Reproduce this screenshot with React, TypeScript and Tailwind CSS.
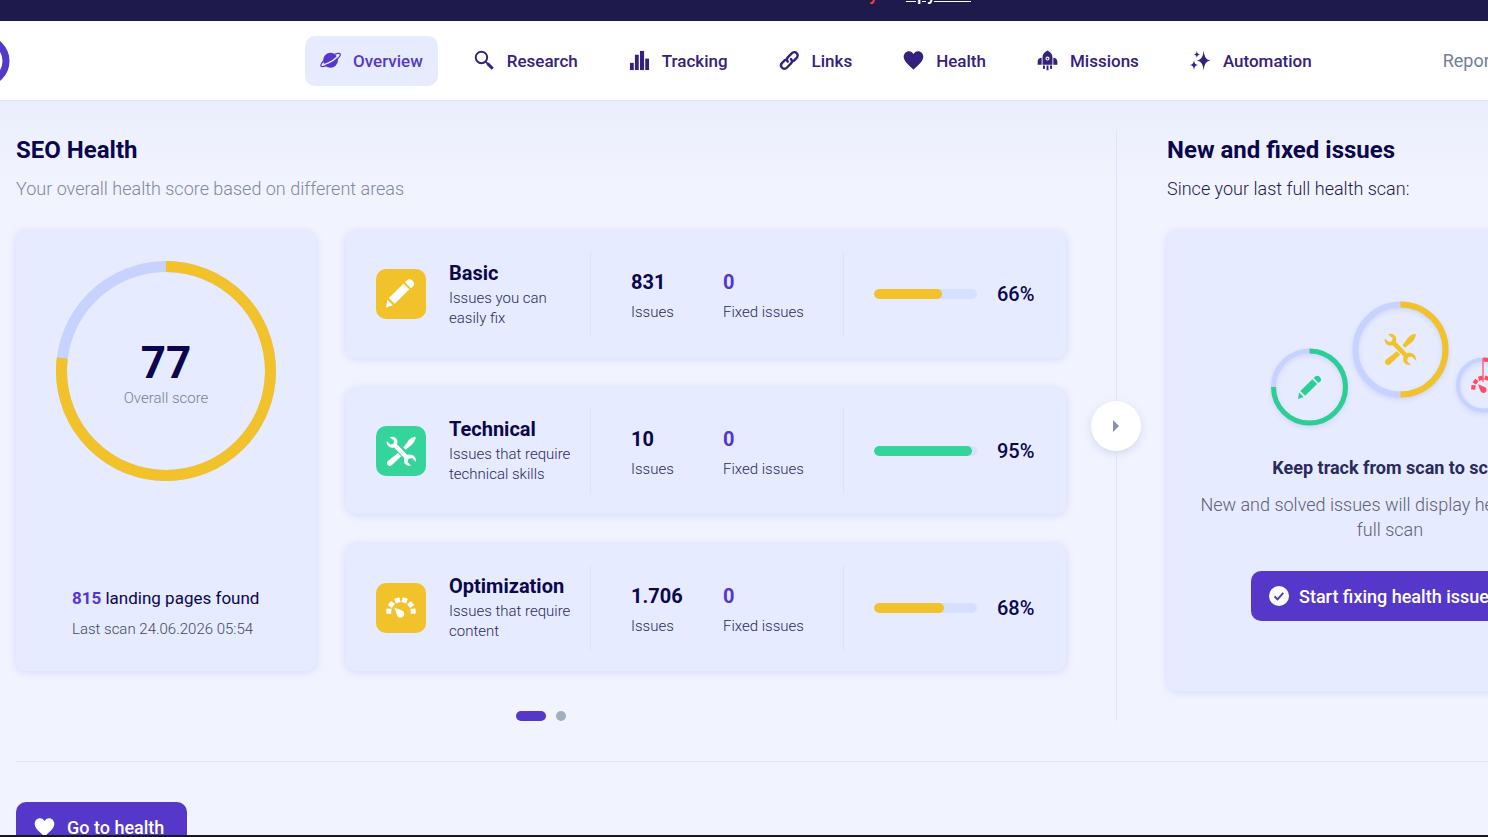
import type { ReactNode } from "react";

type IconProps = { className?: string };

function PlanetIcon({ className }: IconProps) {
  return (
    <svg viewBox="0 0 22 22" className={className} aria-hidden="true" fill="none">
      <circle cx="11" cy="10.700" r="7.800" fill="currentColor" />
      <path
        d="M15.500 4.300 C19.500 3 21.800 3.400 21.200 5.400 C20.200 8.200 16.400 11.400 12.200 13.900 C7.600 16.700 2.200 18.300 1 16.800 C0.500 15.600 1.700 13.600 3.600 11.500"
        stroke="currentColor"
        strokeWidth="1.300"
      />
      <path d="M18.400 5 C19.600 6.400 14.600 10.600 10.400 12.700 C7 14.500 3.400 15.800 3 14.400" stroke="#e6ebfd" strokeWidth="1.500" />
    </svg>
  );
}

function SearchIcon({ className }: IconProps) {
  return (
    <svg viewBox="0 0 22 22" className={className} aria-hidden="true" fill="none" stroke="currentColor">
      <circle cx="7.800" cy="7.800" r="6" strokeWidth="2" />
      <path d="M12.400 12.400 L14.500 14.500" strokeWidth="2" />
      <path d="M14.300 14.300 L19.600 19.600" strokeWidth="3.200" />
    </svg>
  );
}

function BarsIcon({ className }: IconProps) {
  return (
    <svg viewBox="0 0 22 22" className={className} aria-hidden="true" fill="currentColor">
      <rect x="1" y="13.500" width="4" height="7.500" />
      <rect x="6.200" y="5" width="4" height="16" />
      <rect x="11.500" y="1" width="4.300" height="20" />
      <rect x="17" y="9" width="4" height="12" />
    </svg>
  );
}

function LinkIcon({ className }: IconProps) {
  return (
    <svg viewBox="0 0 22 22" className={className} aria-hidden="true" fill="none" stroke="currentColor" strokeWidth="2.500" strokeLinecap="round">
      <path d="M9.200 12.200 C7.600 10.600 7.900 9 9.200 7.700 L13.300 3.500 C14.900 1.900 17 1.700 18.500 3.200 C20.100 4.700 19.900 6.900 18.300 8.500 L15.400 11.400" />
      <path d="M12.500 9.500 C14.100 11.100 13.900 12.700 12.600 14 L8.400 18.300 C6.800 19.900 4.700 20.100 3.200 18.600 C1.700 17.100 1.900 14.900 3.500 13.300 L6.400 10.400" />
    </svg>
  );
}

function HeartIcon({ className }: IconProps) {
  return (
    <svg viewBox="0 0 22 22" className={className} aria-hidden="true" fill="currentColor">
      <path d="M11 20.700 C8.500 17.600 0.700 12.800 0.700 7.200 C0.700 3.700 3.200 1.200 6.200 1.200 C8.400 1.200 10.100 2.300 11 4.300 C11.900 2.300 13.600 1.200 15.800 1.200 C18.800 1.200 21.300 3.700 21.300 7.200 C21.300 12.800 13.500 17.600 11 20.700 Z" />
    </svg>
  );
}

function ShuttleIcon({ className }: IconProps) {
  return (
    <svg viewBox="0 0 22 22" className={className} aria-hidden="true" fill="currentColor">
      <path
        fillRule="evenodd"
        d="M11 0.600 C14 2 16.200 4.600 16.200 7.600 V15.400 H5.800 V7.600 C5.800 4.600 8 2 11 0.600 Z M11 6.900 A2.100 2.100 0 1 0 11 11.100 A2.100 2.100 0 1 0 11 6.900 Z"
      />
      <circle cx="11" cy="9" r="1" />
      <path d="M4.900 8 V15.400 H0.700 V12 C0.700 9.800 2.500 8 4.900 8 Z M17.100 8 V15.400 H21.300 V12 C21.300 9.800 19.500 8 17.100 8 Z" />
      <rect x="6.300" y="16.200" width="2" height="3.600" />
      <rect x="10" y="16.200" width="2" height="5" />
      <rect x="13.700" y="16.200" width="2" height="3.600" />
    </svg>
  );
}

function SparklesIcon({ className }: IconProps) {
  return (
    <svg viewBox="0 0 22 22" className={className} aria-hidden="true" fill="currentColor">
      <path d="M14.300 0.500 C15.200 7.400 16.400 9.800 21.400 11 C16.400 12.200 15.200 14.600 14.300 21.500 C13.400 14.600 12.200 12.200 7.200 11 C12.200 9.800 13.400 7.400 14.300 0.500 Z" />
      <path d="M7.200 1 C7.700 3.500 8.200 4.200 10.200 4.700 C8.200 5.200 7.700 5.900 7.200 8.400 C6.700 5.900 6.200 5.200 4.200 4.700 C6.200 4.200 6.700 3.500 7.200 1 Z" />
      <path d="M4.200 11 C4.900 14.400 5.700 15.200 8.400 15.800 C5.700 16.400 4.900 17.200 4.200 20.600 C3.500 17.200 2.700 16.400 0 15.800 C2.700 15.200 3.500 14.400 4.200 11 Z" />
    </svg>
  );
}

const pencilShape = (
  <>
    <path d="M20.800 1.400 C22.400 -0.100 24.500 -0.100 26 1.300 L27 2.300 C28.600 3.900 28.500 5.900 27.100 7.300 L25 9.200 L19 3.200 Z" />
    <path d="M17.500 4.500 L23.300 10.300 L8.700 24.800 L2.900 19 Z" />
    <path d="M1.400 20.800 L6.900 26.300 L0 28.600 Z" />
  </>
);

const toolsShape = (
  <>
    <path d="M28 0.900 C29 0.300 30.200 1.400 29.600 2.500 C28.600 5.800 26.700 8.400 24.500 9.700 L19.600 13.700 L17.300 11.400 L21.200 6.400 C22.500 3.600 25 1.700 28 0.900 Z" />
    <path d="M12 17 L15.200 20.200 L6 29 C4.800 30.200 3 30.200 1.900 29.200 C0.700 28.100 0.600 26.300 1.800 25.100 Z" />
    <path d="M3.600 1.200 C7.100 -0.300 10.600 1.400 11.300 4.600 C11.600 5.900 11.400 7 11 8.200 L21.300 18.900 C24 18 27 18.700 28.700 20.800 C29.800 22.200 30.100 23.900 29.700 25.700 L26 21.900 L22.300 23 L21.500 26.200 L25 29.600 C21.200 30.600 17.300 27.700 18 23.500 L18.300 22 L8 11.400 C4.200 12.700 0 9.800 0.700 5.100 L4.500 8.400 L7.500 7.700 L8.100 4.700 Z" />
  </>
);

const gaugeShape = (
  <>
    <path d="M8.200 14.400 L16.600 17.800 C18.500 18.900 18.900 21.400 17.600 23.100 C16.300 24.800 13.900 25.100 12.300 23.900 C11.600 23.300 11.200 22.600 11 21.900 Z" />
    {[-86, -52, -17, 17, 52, 86].map((angle) => (
      <rect key={angle} x="12.400" y="4.300" width="5.200" height="5" transform={`rotate(${angle} 15 19)`} />
    ))}
  </>
);

const shapes: Record<string, ReactNode> = { pencil: pencilShape, tools: toolsShape, gauge: gaugeShape };

const navItems = [
  { label: "Overview", Icon: PlanetIcon, active: true },
  { label: "Research", Icon: SearchIcon },
  { label: "Tracking", Icon: BarsIcon },
  { label: "Links", Icon: LinkIcon },
  { label: "Health", Icon: HeartIcon },
  { label: "Missions", Icon: ShuttleIcon },
  { label: "Automation", Icon: SparklesIcon },
];

const areas = [
  { name: "Basic", text: "Issues you can easily fix", issues: "831", fixed: "0", score: 66, icon: "pencil", tone: "bg-[#f1c229]" },
  { name: "Technical", text: "Issues that require technical skills", issues: "10", fixed: "0", score: 95, icon: "tools", tone: "bg-[#35d49a]" },
  { name: "Optimization", text: "Issues that require content", issues: "1.706", fixed: "0", score: 68, icon: "gauge", tone: "bg-[#f1c229]" },
];

const cardClass = "rounded-[10px] bg-[#e6ebff] shadow-[0_1px_8px_0_#d2d7ff]";

function Banner() {
  return (
    <div className="h-[21px] overflow-hidden bg-[#1e1a4b]">
      <div className="mx-auto -mt-4 flex w-[454px] justify-end gap-7 text-[18px] leading-5 font-medium">
        <span className="text-[#ff3f3f]">Today</span>
        <a href="#spy" className="text-white underline">Spy tool</a>
      </div>
    </div>
  );
}

function Header() {
  return (
    <header className="flex h-20 items-center overflow-hidden border-b border-[#dbe3fa] bg-white">
      <a href="#home" aria-label="Home" className="-ml-[41px] w-[346px] shrink-0">
        <svg viewBox="0 0 51 52" className="h-[52px] w-[51px]">
          <circle cx="25" cy="26" r="22" fill="none" stroke="#5538c9" strokeWidth="7" />
        </svg>
      </a>
      <nav className="flex shrink-0 items-center gap-[21px]">
        {navItems.map(({ label, Icon, active }) => (
          <a
            key={label}
            href={`#${label.toLowerCase()}`}
            className={`flex h-[50px] items-center gap-3 rounded-[10px] px-[15px] pt-0.5 text-[17px] font-medium ${
              active ? "bg-[#e6ebfd] text-[#5538c9]" : "text-[#35217b]"
            }`}
          >
            <Icon className="-mt-0.5 size-[21px]" />
            {label}
          </a>
        ))}
      </nav>
      <a href="#reports" className="ml-[116px] shrink-0 text-[18px] text-[#718096]">Reports</a>
    </header>
  );
}

function ScoreCard() {
  return (
    <article className={`flex w-[300px] shrink-0 flex-col items-center justify-between pt-[30px] pb-[26px] ${cardClass}`}>
      <div className="grid size-[220px] place-items-center">
        <svg viewBox="0 0 220 220" className="col-start-1 row-start-1 size-full" aria-hidden="true">
          <g fill="none" strokeWidth="11" transform="rotate(-90 110 110)">
            <circle cx="110" cy="110" r="104.500" stroke="#c8d2ff" />
            <circle cx="110" cy="110" r="104.500" stroke="#f1c229" pathLength="100" strokeDasharray="77 23" />
          </g>
        </svg>
        <div className="col-start-1 row-start-1 pt-1 text-center">
          <p className="text-[44px] leading-[50px] font-bold text-[#0b064d]">77</p>
          <p className="text-[15px] leading-5 font-light text-[#787e9b]">Overall score</p>
        </div>
      </div>
      <div className="w-[188px] whitespace-nowrap">
        <p className="text-[17px] leading-[31px] text-[#0b064d]">
          <strong className="font-bold text-[#5538c9]">815</strong> landing pages found
        </p>
        <p className="text-[15px] leading-[31px] font-light text-[#454860]">Last scan 24.06.2026 05:54</p>
      </div>
    </article>
  );
}

function AreaCard({ area }: { area: (typeof areas)[number] }) {
  return (
    <article className={`flex items-center px-[30px] ${cardClass}`}>
      <span className={`grid size-[50px] shrink-0 place-items-center rounded-[10px] ${area.tone}`}>
        <svg viewBox="0 0 30 30" className="size-[30px] fill-white" aria-hidden="true">{shapes[area.icon]}</svg>
      </span>
      <div className="ml-[23px] flex h-[86px] w-[142px] shrink-0 flex-col justify-center border-r border-[#dce2fa] pb-[3px]">
        <h3 className="text-[20px] leading-[30px] font-bold text-[#0b064d]">{area.name}</h3>
        <p className="w-[125px] text-[15px] leading-5 font-light text-[#2b2a5c]">{area.text}</p>
      </div>
      <dl className="flex h-[86px] shrink-0 items-center border-r border-[#dce2fa] pt-1.5 pl-10 leading-[30px]">
        <div className="flex w-[92px] flex-col-reverse">
          <dt className="text-[15px] font-light text-[#2b2a5c]">Issues</dt>
          <dd className="text-[20px] font-bold text-[#0b064d]">{area.issues}</dd>
        </div>
        <div className="flex w-[120px] flex-col-reverse">
          <dt className="text-[15px] font-light text-[#2b2a5c]">Fixed issues</dt>
          <dd className="text-[20px] font-bold text-[#5538c9]">{area.fixed}</dd>
        </div>
      </dl>
      <div className="ml-[30px] h-2.5 flex-1 overflow-hidden rounded-full bg-[#d7dfff]">
        <div className={`h-full rounded-full ${area.tone}`} style={{ width: `${area.score}%` }} />
      </div>
      <p className="ml-5 w-[39px] text-[20px] leading-[30px] font-medium text-[#0b064d]">{area.score}%</p>
    </article>
  );
}

function Ring({ cx, cy, r, width, share, color }: { cx: number; cy: number; r: number; width: number; share: number; color: string }) {
  return (
    <g fill="none" strokeWidth={width} className="drop-shadow-[0_2px_2px_#cfd5fb]">
      <circle cx={cx} cy={cy} r={r} stroke="#c8d2ff" />
      <circle cx={cx} cy={cy} r={r} stroke={color} pathLength="100" strokeDasharray={`${share} ${100 - share}`} transform={`rotate(-90 ${cx} ${cy})`} />
    </g>
  );
}

function ScanRings() {
  return (
    <svg viewBox="-1 1 242 130" className="h-[130px] w-[242px] shrink-0" aria-hidden="true">
      <Ring cx={39.5} cy={87} r={36} width={5} share={75} color="#2bce93" />
      <Ring cx={130.5} cy={49.5} r={45} width={6} share={50} color="#f1c229" />
      <Ring cx={213.5} cy={85} r={25.500} width={4} share={25} color="#ff4d5e" />
      <g fill="#2bce93" transform="translate(28 75.500) scale(0.820)">{pencilShape}</g>
      <g fill="#f1c229" transform="translate(114 33) scale(1.070)">{toolsShape}</g>
      <g fill="#ff4d5e" transform="translate(201 72) scale(0.850)">{gaugeShape}</g>
      <path d="M213 58 V82" stroke="#ff4d5e" strokeWidth="1.200" />
    </svg>
  );
}

export default function App() {
  return (
    <div className="flex h-screen flex-col overflow-hidden border-b-2 border-[#1a181d] bg-[#f1f3ff] font-[Roboto,sans-serif]">
      <div className="shrink-0">
        <Banner />
        <Header />
      </div>
      <main className="shrink-0 bg-[linear-gradient(#eaeefb,#f1f3ff_80px)] pt-[29px] pb-10 pl-4">
        <div className="flex">
          <section className="min-w-[1050px] flex-1">
            <h2 className="text-[24px] leading-10 font-bold text-[#0b064d]">SEO Health</h2>
            <p className="text-[18px] leading-[38px] font-light text-[#7f87a6]">Your overall health score based on different areas</p>
            <div className="mt-[23px] flex min-h-[440px] gap-[30px]">
              <ScoreCard />
              <div className="grid flex-1 grid-rows-3 gap-[30px]">
                {areas.map((area) => (
                  <AreaCard key={area.name} area={area} />
                ))}
              </div>
            </div>
            <div className="mt-10 flex justify-center gap-2.5">
              <button type="button" aria-label="Slide 1" className="h-2.5 w-[30px] rounded-full bg-[#5538c9]" />
              <button type="button" aria-label="Slide 2" className="size-2.5 rounded-full bg-[#a0aec0]" />
            </div>
          </section>

          <div className="relative mx-[50px] w-px shrink-0 bg-[#dbe6fc]">
            <button
              type="button"
              aria-label="Next"
              className="absolute top-1/2 -left-[25px] grid size-[50px] -translate-y-1/2 place-items-center rounded-full bg-white shadow-[0_3px_8px_#d3d9f0]"
            >
              <svg viewBox="0 0 6 12" className="h-3 w-1.5" aria-hidden="true">
                <path d="M0 0 L6 6 L0 12 Z" fill="#8a90ad" />
              </svg>
            </button>
          </div>

          <section className="w-[446px] shrink-0">
            <h2 className="text-[24px] leading-10 font-bold text-[#0b064d]">New and fixed issues</h2>
            <p className="text-[18px] leading-[38px] font-light text-[#1e1a4b]">Since your last full health scan:</p>
            <article className={`mt-[23px] flex min-h-[460px] flex-col items-center px-8 pt-[70px] text-center ${cardClass}`}>
              <ScanRings />
              <h3 className="mt-[22px] text-[18px] leading-[30px] font-bold text-[#2b2a5c]">Keep track from scan to scan</h3>
              <p className="mt-[9px] text-[18px] leading-[25px] font-light text-[#5d6078]">
                New and solved issues will display here after the full scan
              </p>
              <button type="button" className="mt-[29px] flex h-[50px] w-[278px] shrink-0 items-center gap-2.5 rounded-[10px] bg-[#5538c9] px-[18px] text-[18px] font-medium whitespace-nowrap text-white">
                <svg viewBox="0 0 20 20" className="size-5 shrink-0" aria-hidden="true">
                  <circle cx="10" cy="10" r="10" fill="#fff" />
                  <path d="M5.500 10.500 L8.500 13.300 L14.300 6.900" fill="none" stroke="#5538c9" strokeWidth="2" />
                </svg>
                Start fixing health issues
              </button>
            </article>
          </section>
        </div>
        <hr className="mt-10 border-[#dbe3fa]" />
        <a href="#health" className="mt-10 flex h-[50px] w-[171px] items-center gap-3 rounded-[10px] bg-[#5538c9] px-[18px] text-[18px] font-medium whitespace-nowrap text-white">
          <HeartIcon className="size-[21px] shrink-0" />
          Go to health
        </a>
      </main>
    </div>
  );
}
